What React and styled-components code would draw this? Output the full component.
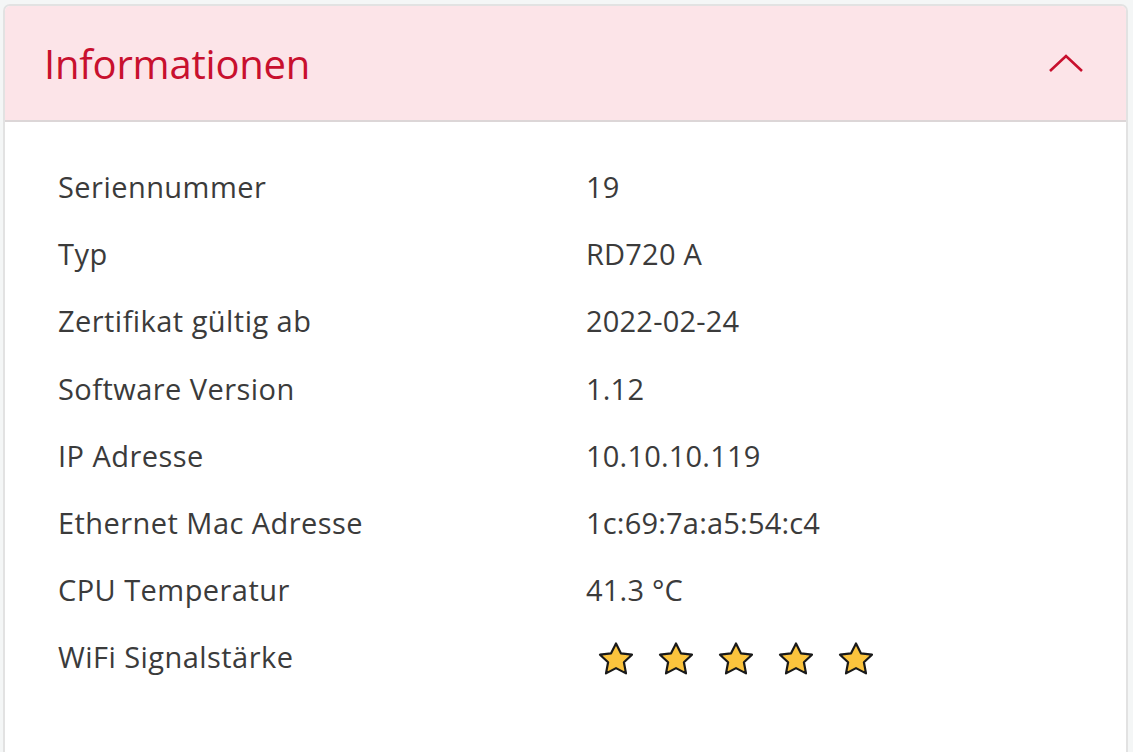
import React from 'react';
import styled, { createGlobalStyle } from 'styled-components';

const GlobalStyle = createGlobalStyle`
  html, body {
    margin: 0;
    padding: 0;
    background: #f4f6f6;
  }
  body {
    font-family: "Open Sans", "Noto Sans", sans-serif;
  }
`;

const Page = styled.div`
  padding: 4px 5px 0 3px;
  height: 752px;
  box-sizing: border-box;
  overflow: hidden;
`;

const Card = styled.section`
  background: #fff;
  border: 2px solid #e2e2e2;
  border-bottom: none;
  border-radius: 7px 7px 0 0;
  height: 760px;
  overflow: hidden;
`;

const Header = styled.header`
  display: flex;
  align-items: center;
  justify-content: space-between;
  height: 114px;
  padding: 0 42px 0 39px;
  background: #fce4e8;
  border-bottom: 2px solid #dcd6d7;
`;

const Title = styled.h2`
  margin: 0;
  font-weight: 400;
  font-size: 40px;
  color: #c8102e;
  letter-spacing: -0.2px;
`;

const Body = styled.div`
  padding: 31px 0 0 53px;
`;

const Row = styled.div`
  display: grid;
  grid-template-columns: 528px 1fr;
  align-items: center;
  height: 67.2px;
  font-size: 29px;
  color: #3b3b3b;
`;

const Label = styled.span`
  letter-spacing: 0.45px;
`;

const Value = styled.span`
  letter-spacing: 0.2px;
`;

const Stars = styled.div`
  display: flex;
  gap: 24px;
  padding-left: 12px;
  padding-top: 6px;
`;

const Chevron = () => (
  <svg width="36" height="20" viewBox="0 0 36 20">
    <path d="M2 18 L18 3 L34 18" fill="none" stroke="#c8102e" strokeWidth="2.6" />
  </svg>
);

const Star = () => (
  <svg width="36" height="35" viewBox="0 0 36 35">
    <path
      d="M18 1.5 L22.9 11.3 L34 12.7 L25.9 20.3 L28 31.4 L18 26.1 L8 31.4 L10.1 20.3 L2 12.7 L13.1 11.3 Z"
      fill="#fcc43d"
      stroke="#1a1a1a"
      strokeWidth="2.2"
      strokeLinejoin="round"
    />
  </svg>
);

const rows = [
  ['Seriennummer', '19'],
  ['Typ', 'RD720 A'],
  ['Zertifikat gültig ab', '2022-02-24'],
  ['Software Version', '1.12'],
  ['IP Adresse', '10.10.10.119'],
  ['Ethernet Mac Adresse', '1c:69:7a:a5:54:c4'],
  ['CPU Temperatur', '41.3 °C'],
];

export default function App() {
  return (
    <>
      <GlobalStyle />
      <Page>
        <Card>
          <Header>
            <Title>Informationen</Title>
            <Chevron />
          </Header>
          <Body>
            {rows.map(([label, value]) => (
              <Row key={label}>
                <Label>{label}</Label>
                <Value>{value}</Value>
              </Row>
            ))}
            <Row>
              <Label>WiFi Signalstärke</Label>
              <Stars>
                {[0, 1, 2, 3, 4].map((i) => (
                  <Star key={i} />
                ))}
              </Stars>
            </Row>
          </Body>
        </Card>
      </Page>
    </>
  );
}
